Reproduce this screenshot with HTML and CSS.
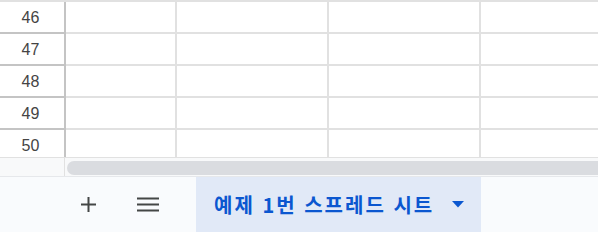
FILE: index.html
```html
<!DOCTYPE html>
<html lang="ko">
<head>
<meta charset="utf-8">
<link rel="stylesheet" href="styles.css">
</head>
<body>
<div class="sheet">
  <div class="grid">
    <div class="row"><div class="rh">46</div><div class="c"></div><div class="c"></div><div class="c"></div><div class="c"></div></div>
    <div class="row"><div class="rh">47</div><div class="c"></div><div class="c"></div><div class="c"></div><div class="c"></div></div>
    <div class="row"><div class="rh">48</div><div class="c"></div><div class="c"></div><div class="c"></div><div class="c"></div></div>
    <div class="row"><div class="rh">49</div><div class="c"></div><div class="c"></div><div class="c"></div><div class="c"></div></div>
    <div class="row"><div class="rh">50</div><div class="c"></div><div class="c"></div><div class="c"></div><div class="c"></div></div>
  </div>
  <div class="scrollbar">
    <div class="sb-corner"></div>
    <div class="sb-track"><div class="sb-thumb"></div></div>
  </div>
  <div class="tabbar">
    <button class="icon-btn plus" aria-label="시트 추가">
      <svg width="15" height="15" viewBox="0 0 15 15"><path d="M7.5 0v15M0 7.5h15" stroke="#444746" stroke-width="2" fill="none"/></svg>
    </button>
    <button class="icon-btn menu" aria-label="모든 시트">
      <svg width="22" height="15" viewBox="0 0 22 15"><path d="M0 1.5h22M0 7.5h22M0 13.5h22" stroke="#444746" stroke-width="2" fill="none"/></svg>
    </button>
    <div class="tab">
      <span class="tab-name">예제 1번 스프레드 시트</span>
      <svg class="caret" width="12" height="7" viewBox="0 0 12 7"><path d="M0 0h12L6 6.5z" fill="#0b57d0"/></svg>
    </div>
  </div>
</div>
</body>
</html>
```

FILE: styles.css
```css
html, body {
  margin: 0;
  padding: 0;
  background: #ffffff;
}
.sheet {
  width: 598px;
  height: 232px;
  overflow: hidden;
  display: flex;
  flex-direction: column;
  font-family: "Liberation Sans", Arial, sans-serif;
}
.grid {
  height: 157px;
  overflow: hidden;
  border-top: 2px solid #e1e1e1;
  box-sizing: border-box;
  flex: none;
}
.row {
  display: grid;
  grid-template-columns: 66px 111px 152px 152px 152px;
  height: 32px;
  box-sizing: border-box;
  border-bottom: 2px solid #e1e1e1;
}
.rh {
  border-right: 2px solid #c4c4c4;
  box-shadow: 0 2px 0 #c4c4c4;
  display: flex;
  align-items: center;
  justify-content: center;
  font-size: 16px;
  color: #444444;
  padding: 2px 3px 0 0;
}
.grid .row:first-child .rh {
  box-shadow: 0 2px 0 #c4c4c4, 0 -2px 0 #c4c4c4;
}
.c {
  border-right: 2px solid #e1e1e1;
}
.scrollbar {
  flex: none;
  display: flex;
  border-top: 1px solid #e1e1e1;
  border-bottom: 1px solid #e6e8eb;
  background: #f8f9fa;
  box-sizing: border-box;
  height: 20px;
}
.sb-corner {
  width: 64px;
  border-right: 1px solid #e1e1e1;
  flex: none;
}
.sb-track {
  flex: 1;
  padding: 3px 0 2px 2px;
}
.sb-thumb {
  height: 14px;
  border-radius: 7px 0 0 7px;
  background: #dadce0;
}
.tabbar {
  flex: 1;
  display: flex;
  align-items: stretch;
  background: #f9fbfd;
}
.icon-btn {
  border: 0;
  background: none;
  padding: 0;
  display: flex;
  align-items: center;
  justify-content: center;
}
.plus {
  margin-left: 81px;
  width: 15px;
}
.menu {
  margin-left: 41px;
  width: 22px;
}
.tab {
  margin-left: 37px;
  width: 285px;
  background: #e1e9f7;
  display: flex;
  align-items: center;
  box-sizing: border-box;
  padding-left: 18px;
}
.tab-name {
  font-family: "Noto Sans CJK KR", "Noto Sans", sans-serif;
  font-weight: 700;
  font-size: 20px;
  color: #0b57d0;
  letter-spacing: 2px;
}
.caret {
  margin-left: 18px;
}
```
